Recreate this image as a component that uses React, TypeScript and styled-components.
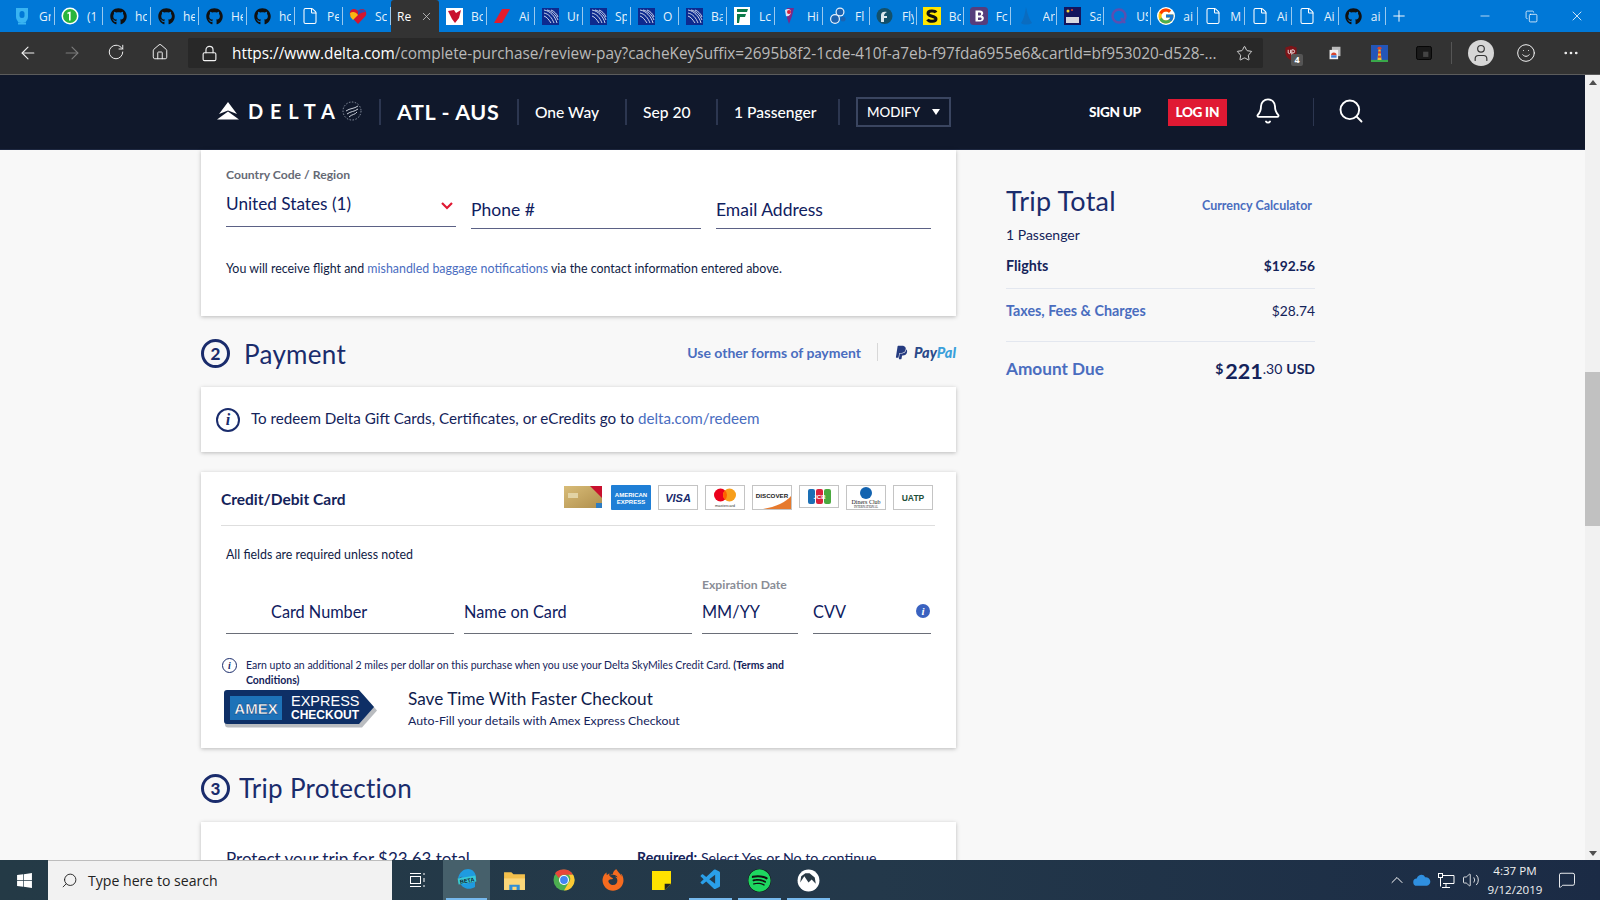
import React from "react";
import styled, { createGlobalStyle } from "styled-components";
import {
  ArrowLeft,
  ArrowRight,
  RotateCw,
  Home,
  Lock,
  Star,
  Bell,
  Search,
  Minus,
  X,
  Plus,
  Copy,
  Smile,
  MoreHorizontal,
  ChevronUp,
  User,
  File,
  Volume2,
  MessageSquare,
} from "lucide-react";
import { FaGithub, FaWindows, FaFirefoxBrowser, FaSpotify, FaPaypal } from "react-icons/fa";
import { VscVscode } from "react-icons/vsc";
import { FcGoogle } from "react-icons/fc";

const GlobalStyle = createGlobalStyle`
  html, body {
    margin: 0;
    padding: 0;
    overflow: hidden;
    background: #f8f8f8;
  }
  * { box-sizing: border-box; }
`;

const SITE_FONT = `Lato, "Liberation Sans", sans-serif`;
const UI_FONT = `"Open Sans", "Noto Sans", sans-serif`;
const NAVY = "#0f2060";
const LINK = "#4a6dbf";

const Screen = styled.div`
  width: 1600px;
  height: 900px;
  display: flex;
  flex-direction: column;
  overflow: hidden;
  font-family: ${SITE_FONT};
`;

/* browser chrome */
const TabStrip = styled.div`
  height: 32px;
  background: #0078d7;
  display: flex;
  padding-left: 7px;
  flex: none;
`;
const Tab = styled.div<{ $active?: boolean; $w: number }>`
  width: ${(p) => p.$w}px;
  height: 32px;
  display: flex;
  align-items: center;
  position: relative;
  overflow: hidden;
  background: ${(p) => (p.$active ? "#333333" : "transparent")};
  border-radius: ${(p) => (p.$active ? "3px 3px 0 0" : "0")};
  &::after {
    content: "";
    display: ${(p) => (p.$active ? "none" : "block")};
    position: absolute;
    right: 0;
    top: 7px;
    bottom: 7px;
    width: 1px;
    background: rgba(255, 255, 255, 0.6);
  }
`;
const TabIcon = styled.span`
  width: 20px;
  height: 20px;
  margin-left: 5px;
  flex: none;
  display: flex;
  align-items: center;
  justify-content: center;
`;
const TabLabel = styled.span`
  margin-left: 7px;
  width: 12px;
  overflow: hidden;
  white-space: nowrap;
  font: 12px ${UI_FONT};
  color: #ffffff;
  opacity: 0.9;
`;
const ActiveLabel = styled.span`
  margin-left: 6px;
  font: 12px ${UI_FONT};
  color: #ffffff;
`;
const TabClose = styled.span`
  margin-left: 9px;
  display: flex;
  color: #c8c8c8;
`;
const NewTab = styled.span`
  width: 24px;
  margin-left: 1px;
  display: flex;
  align-items: center;
  justify-content: center;
  color: #fff;
`;
const WindowControls = styled.div`
  margin-left: auto;
  display: flex;
  align-items: center;
  color: #fff;
`;
const WindowButton = styled.span`
  width: 46px;
  display: flex;
  justify-content: center;
`;

const AddressBar = styled.div`
  height: 43px;
  background: #333333;
  border-bottom: 1px solid #5c5c5c;
  display: flex;
  align-items: center;
  color: #f2f2f2;
  flex: none;
`;
const NavButton = styled.span<{ $dim?: boolean }>`
  width: 44px;
  display: flex;
  justify-content: center;
  color: ${(p) => (p.$dim ? "#7d7d7d" : "#f2f2f2")};
`;
const NavGroup = styled.div`
  display: flex;
  width: 188px;
  padding-left: 6px;
`;
const UrlBox = styled.div`
  width: 1075px;
  height: 30px;
  border-radius: 2px;
  background: #282828;
  display: flex;
  align-items: center;
  padding: 0 10px 0 13px;
`;
const UrlText = styled.div`
  margin-left: 14px;
  flex: 1;
  font: 15.4px ${UI_FONT};
  color: #b9b9b9;
  white-space: nowrap;
  overflow: hidden;
  letter-spacing: -0.02px;
  b {
    font-weight: 400;
    color: #ffffff;
  }
`;
const Extensions = styled.div`
  display: flex;
  align-items: center;
  flex: 1;
  padding-left: 6px;
`;
const ExtSlot = styled.span`
  width: 44.3px;
  display: flex;
  justify-content: center;
  position: relative;
`;
const TrailSlot = styled(ExtSlot)`
  margin-left: 10px;
`;
const UBadge = styled.span`
  position: absolute;
  left: 22px;
  top: 9px;
  width: 12px;
  height: 12px;
  background: #555;
  border-radius: 2px;
  color: #fff;
  font: bold 9px/12px ${UI_FONT};
  text-align: center;
`;
const ExtDivider = styled.span`
  width: 1px;
  height: 22px;
  background: #555;
  margin: 0 16px 0 5px;
`;
const Avatar = styled.span`
  width: 26px;
  height: 26px;
  border-radius: 50%;
  background: #d6d6d6;
  color: #333;
  display: flex;
  align-items: center;
  justify-content: center;
`;

/* site area */
const Viewport = styled.div`
  flex: 1;
  min-height: 0;
  display: flex;
  background: #f8f8f8;
`;
const SitePane = styled.div`
  flex: 1;
  min-width: 0;
  display: flex;
  flex-direction: column;
  overflow: hidden;
`;
const ScrollBar = styled.div`
  width: 15px;
  background: #f1f1f1;
  display: flex;
  flex-direction: column;
  align-items: center;
  padding-top: 5px;
`;
const ScrollThumb = styled.div`
  width: 15px;
  height: 154px;
  background: #c1c1c1;
  margin-top: 287px;
`;
const ScrollArrow = styled.div<{ $down?: boolean }>`
  width: 0;
  height: 0;
  border-left: 4px solid transparent;
  border-right: 4px solid transparent;
  ${(p) => (p.$down ? "border-top: 5px solid #505050; margin-top: auto; margin-bottom: 4px;" : "border-bottom: 5px solid #505050;")}
`;

const SiteHeader = styled.header`
  height: 75px;
  background: #10182b;
  border-bottom: 1px solid #1d2740;
  display: flex;
  align-items: center;
  padding: 0 0 0 217px;
  color: #fff;
  flex: none;
`;
const Brand = styled.div`
  display: flex;
  align-items: center;
  width: 162px;
  margin-top: -3px;
`;
const BrandWord = styled.span`
  font: 700 20px ${SITE_FONT};
  letter-spacing: 6.8px;
  margin-left: 9px;
`;
const HeaderSep = styled.span`
  width: 2px;
  height: 26px;
  background: #2c3650;
  flex: none;
`;
const Route = styled.span`
  font: 700 21.5px ${SITE_FONT};
  letter-spacing: 0.6px;
  width: 136px;
  padding-left: 16px;
  white-space: nowrap;
`;
const Crumb = styled.span<{ $w: number }>`
  width: ${(p) => p.$w}px;
  padding-left: 16px;
  font: 500 15.6px ${SITE_FONT};
  white-space: nowrap;
`;
const ModifyButton = styled.span`
  width: 95px;
  height: 30px;
  margin-left: 16px;
  border: 2px solid #3a4560;
  display: flex;
  align-items: center;
  justify-content: space-between;
  padding: 0 9px 0 9px;
  font: 500 13.4px ${SITE_FONT};
`;
const Caret = styled.span`
  width: 0;
  height: 0;
  border-left: 4px solid transparent;
  border-right: 4px solid transparent;
  border-top: 6px solid #fff;
`;
const SignUp = styled.span`
  margin-left: 138px;
  font: 900 13.6px ${SITE_FONT};
  letter-spacing: -0.3px;
`;
const LogIn = styled.span`
  margin-left: 27px;
  width: 59px;
  height: 27px;
  background: #e01933;
  display: flex;
  align-items: center;
  justify-content: center;
  font: 900 13.6px ${SITE_FONT};
  letter-spacing: -0.3px;
`;
const HeaderIcon = styled.span<{ $ml: number }>`
  margin-left: ${(p) => p.$ml}px;
  display: flex;
  margin-top: -3px;
`;
const HeaderRule = styled.span`
  margin-left: 31px;
  width: 1px;
  height: 28px;
  background: #2c3650;
`;

const Columns = styled.div`
  display: flex;
  padding-left: 201px;
  gap: 50px;
  align-items: flex-start;
`;
const MainColumn = styled.main`
  width: 755px;
  flex: none;
`;
const Card = styled.section`
  background: #fff;
  box-shadow: 0 1px 4px rgba(0, 0, 0, 0.25);
`;
const ContactCard = styled(Card)`
  height: 166px;
  padding: 18px 25px 0;
`;
const SmallLabel = styled.div<{ $light?: boolean }>`
  font: 700 12.2px/14px ${SITE_FONT};
  color: ${(p) => (p.$light ? "#8a8d96" : "#666a75")};
`;
const ContactRow = styled.div`
  display: grid;
  grid-template-columns: 230px 230px 215px;
  column-gap: 15px;
  margin-top: 2px;
  align-items: start;
`;
const SelectField = styled.div`
  height: 43px;
  border-bottom: 1px solid #5b6185;
  display: flex;
  justify-content: space-between;
  align-items: flex-start;
  padding-top: 9px;
  font: 400 17.2px/22px ${SITE_FONT};
  color: ${NAVY};
`;
const SelectChevron = styled.svg`
  margin: 9px 3px 0 0;
`;
const LineField = styled.div<{ $h: number; $top: number; $size: number; $pad?: number; $rule?: string }>`
  height: ${(p) => p.$h}px;
  border-bottom: 1px solid ${(p) => p.$rule || "#5b6185"};
  padding: ${(p) => p.$top}px 0 0 ${(p) => p.$pad || 0}px;
  font: 400 ${(p) => p.$size}px/22px ${SITE_FONT};
  color: ${NAVY};
  position: relative;
  white-space: nowrap;
`;
const CvvField = styled(LineField)`
  margin-left: 5px;
`;
const Fine = styled.p`
  margin: 32px 0 0;
  font: 400 12.4px/16px ${SITE_FONT};
  color: #101c45;
  a {
    color: ${LINK};
    text-decoration: none;
  }
`;

const SectionHead = styled.div<{ $h: number; $gap: number; $top: number }>`
  height: ${(p) => p.$h}px;
  padding-top: ${(p) => p.$top}px;
  display: flex;
  align-items: center;
  gap: ${(p) => p.$gap}px;
`;
const StepCircle = styled.span`
  width: 29px;
  height: 29px;
  border: 3px solid #1a2c6c;
  border-radius: 50%;
  display: flex;
  align-items: center;
  justify-content: center;
  font: 900 17px ${SITE_FONT};
  color: #1a2c6c;
  flex: none;
`;
const SectionTitle = styled.h2`
  margin: 0;
  font: 400 26px ${SITE_FONT};
  letter-spacing: 0.3px;
  color: #1a2c6c;
`;
const PayAlt = styled.div`
  margin-left: auto;
  display: flex;
  align-items: center;
  margin-top: -3px;
`;
const PayLink = styled.a`
  font: 700 14px ${SITE_FONT};
  color: ${LINK};
`;
const PaySep = styled.span`
  width: 1px;
  height: 18px;
  background: #d8d8d8;
  margin: 0 16px;
`;
const PayPalMark = styled.span`
  display: flex;
  align-items: center;
  gap: 5px;
  font: italic 900 14.5px ${SITE_FONT};
  color: #2b4a8a;
  i {
    color: #3aa0db;
  }
`;

const RedeemCard = styled(Card)`
  height: 65px;
  display: flex;
  align-items: center;
  padding-left: 15px;
  gap: 11px;
  font: 400 15.2px ${SITE_FONT};
  color: #14235a;
  a {
    color: ${LINK};
  }
`;
const RedeemText = styled.span`
  margin-top: -3px;
`;
const InfoCircle = styled.span<{ $size: number; $stroke: number }>`
  width: ${(p) => p.$size}px;
  height: ${(p) => p.$size}px;
  border: ${(p) => p.$stroke}px solid #1a2c6c;
  border-radius: 50%;
  display: flex;
  align-items: center;
  justify-content: center;
  flex: none;
  font: italic 700 ${(p) => Math.round(p.$size * 0.66)}px "Liberation Serif", serif;
  color: #1a2c6c;
`;
const PaymentCard = styled(Card)`
  height: 276px;
  margin-top: 20px;
  padding: 0 21px 0 20px;
`;
const CardHead = styled.div`
  height: 54px;
  border-bottom: 1px solid #dedede;
  display: flex;
  align-items: center;
  justify-content: space-between;
  padding: 0 2px 0 0;
`;
const CardTitle = styled.div`
  font: 700 15.5px ${SITE_FONT};
  color: #14235a;
`;
const Logos = styled.div`
  display: flex;
  gap: 7px;
  margin-top: -2px;
`;
const LogoFrame = styled.svg`
  display: block;
`;
const PaymentBody = styled.div`
  padding: 21px 5px 0;
`;
const Required = styled.div`
  font: 400 12.4px/16px ${SITE_FONT};
  color: #101c45;
`;
const ExpiryRow = styled.div`
  margin: 15px 0 0 476px;
`;
const CardFields = styled.div`
  display: grid;
  grid-template-columns: 228px 228px 96px 123px;
  column-gap: 10px;
  margin-top: -4px;
`;
const CvvDot = styled.span`
  position: absolute;
  right: 1px;
  top: 16px;
  width: 14px;
  height: 14px;
  border-radius: 50%;
  background: #3a62c0;
  color: #fff;
  font: italic 700 11px/14px "Liberation Serif", serif;
  text-align: center;
`;
const EarnRow = styled.div`
  display: flex;
  margin: 24px 0 0 -4px;
  gap: 9px;
`;
const EarnText = styled.p`
  margin: 0;
  width: 545px;
  font: 400 10.5px/15px ${SITE_FONT};
  color: #14235a;
  b {
    font-weight: 700;
  }
`;
const AmexRow = styled.div`
  display: flex;
  margin: 2px 0 0 -2px;
  align-items: flex-start;
`;
const AmexCopy = styled.div`
  margin: -3px 0 0 30px;
`;
const AmexTitle = styled.div`
  font: 400 17.2px/24px ${SITE_FONT};
  color: #0f1c4d;
`;
const AmexSub = styled.div`
  font: 400 12.3px/19px ${SITE_FONT};
  color: #14235a;
`;
const ProtectionCard = styled(Card)`
  height: 80px;
  padding: 26px 25px 0;
  display: grid;
  grid-template-columns: 411px 1fr;
`;
const ProtectTitle = styled.div`
  font: 400 17px/22px ${SITE_FONT};
  color: #14235a;
`;
const ProtectNote = styled.div`
  font: 400 14.2px/20px ${SITE_FONT};
  color: #14235a;
  b {
    font-weight: 700;
  }
`;

/* trip total */
const Summary = styled.aside`
  width: 309px;
  padding-top: 31px;
`;
const SummaryHead = styled.div`
  display: flex;
  justify-content: space-between;
  align-items: center;
  padding-right: 3px;
  height: 40px;
`;
const SummaryTitle = styled.h2`
  margin: -2px 0 0;
  font: 400 27px ${SITE_FONT};
  letter-spacing: 0.2px;
  color: #1a2c6c;
`;
const CalcLink = styled.a`
  font: 700 12.5px ${SITE_FONT};
  color: ${LINK};
  margin-top: 8px;
`;
const Passengers = styled.div`
  font: 400 14px/20px ${SITE_FONT};
  color: #14235a;
  margin-top: 4px;
`;
const SummaryRow = styled.div<{ $h: number; $rule?: boolean; $top: number }>`
  height: ${(p) => p.$h}px;
  padding-top: ${(p) => p.$top}px;
  display: flex;
  justify-content: space-between;
  align-items: flex-start;
  border-bottom: ${(p) => (p.$rule ? "1px solid #e3e7ef" : "none")};
`;
const RowName = styled.span<{ $link?: boolean; $big?: boolean }>`
  font: 700 ${(p) => (p.$big ? 17.2 : 14.3)}px/22px ${SITE_FONT};
  color: ${(p) => (p.$link ? LINK : "#14235a")};
`;
const RowValue = styled.span<{ $bold?: boolean }>`
  font: ${(p) => (p.$bold ? 700 : 400)} 13.8px/22px ${SITE_FONT};
  color: #14235a;
`;
const Amount = styled.span`
  display: flex;
  align-items: flex-start;
  color: #14235a;
  font: 700 14px/22px ${SITE_FONT};
  strong {
    font: 700 21.5px/27px ${SITE_FONT};
    margin: 0 0 0 2px;
  }
  em {
    font-style: normal;
    font-weight: 400;
    margin-right: 4px;
  }
`;

/* task bar */
const TaskBar = styled.div`
  height: 40px;
  flex: none;
  display: flex;
  align-items: center;
  background: linear-gradient(90deg, #243a46 0%, #23384a 55%, #1b2b45 100%);
  color: #fff;
`;
const StartButton = styled.span`
  width: 48px;
  display: flex;
  justify-content: center;
`;
const SearchBox = styled.div`
  width: 344px;
  height: 40px;
  background: #f2f2f2;
  border-top: 1px solid #bdbdbd;
  display: flex;
  align-items: center;
  padding-left: 13px;
  gap: 10px;
  color: #222;
  font: 14.1px ${UI_FONT};
`;
const TaskSlot = styled.span<{ $w?: number; $active?: boolean; $running?: boolean }>`
  width: ${(p) => p.$w || 49}px;
  height: 40px;
  display: flex;
  align-items: center;
  justify-content: center;
  position: relative;
  background: ${(p) => (p.$active ? "#46606b" : "transparent")};
  &::after {
    content: "";
    display: ${(p) => (p.$running ? "block" : "none")};
    position: absolute;
    left: 3px;
    right: 3px;
    bottom: 0;
    height: 2px;
    background: #76b9ed;
  }
`;
const Tray = styled.div`
  margin-left: auto;
  display: flex;
  align-items: center;
  height: 40px;
  padding-right: 13px;
`;
const TraySlot = styled.span`
  width: 24.5px;
  display: flex;
  justify-content: center;
`;
const Clock = styled.div`
  width: 64px;
  text-align: center;
  white-space: nowrap;
  font: 11.6px/19px ${UI_FONT};
  color: #f0f0f0;
`;
const Notify = styled.span`
  width: 40px;
  display: flex;
  justify-content: center;
`;

type FavKind =
  | "mic" | "whatsapp" | "github" | "doc" | "southwest" | "virgin" | "slash" | "united"
  | "lc" | "hi" | "bubbles" | "fly" | "s" | "boot" | "fin" | "ivy" | "q" | "google";

const tabs: { kind: FavKind; label: string }[] = [
  { kind: "mic", label: "Gr" },
  { kind: "whatsapp", label: "(1" },
  { kind: "github", label: "hc" },
  { kind: "github", label: "he" },
  { kind: "github", label: "He" },
  { kind: "github", label: "hc" },
  { kind: "doc", label: "Pe" },
  { kind: "southwest", label: "Sc" },
  { kind: "doc", label: "Re" },
  { kind: "virgin", label: "Bc" },
  { kind: "slash", label: "Ai" },
  { kind: "united", label: "Ur" },
  { kind: "united", label: "Sp" },
  { kind: "united", label: "O" },
  { kind: "united", label: "Ba" },
  { kind: "lc", label: "Lc" },
  { kind: "hi", label: "Hi" },
  { kind: "bubbles", label: "Fl" },
  { kind: "fly", label: "Fly" },
  { kind: "s", label: "Bc" },
  { kind: "boot", label: "Fc" },
  { kind: "fin", label: "Ar" },
  { kind: "ivy", label: "Sa" },
  { kind: "q", label: "US" },
  { kind: "google", label: "ai" },
  { kind: "doc", label: "M" },
  { kind: "doc", label: "Ai" },
  { kind: "doc", label: "Ai" },
  { kind: "github", label: "ai" },
];

const Favicon = ({ kind }: { kind: FavKind }) => {
  switch (kind) {
    case "mic":
      return (
        <svg width="16" height="18" viewBox="0 0 16 18">
          <path d="M2 1h12v9a6 6 0 0 1-12 0z" fill="#39b4f2" />
          <rect x="5.5" y="4" width="5" height="7" rx="2.5" fill="#0078d7" />
          <rect x="4" y="15.5" width="8" height="2" fill="#39b4f2" />
        </svg>
      );
    case "whatsapp":
      return (
        <svg width="18" height="18" viewBox="0 0 18 18">
          <circle cx="9" cy="9" r="8.5" fill="#fff" />
          <circle cx="9" cy="9" r="7" fill="#29b53d" />
          <path d="M9.6 4.5v9H8v-7l-1.5.7V5.6z" fill="#fff" />
        </svg>
      );
    case "github":
      return <FaGithub size={17} color="#101010" />;
    case "doc":
      return <File size={18} color="#fff" strokeWidth={1.4} />;
    case "southwest":
      return (
        <svg width="18" height="17" viewBox="0 0 18 17">
          <path d="M9 16 1.5 8C-.5 5 1.500 1 5 1c2 0 3.200 1 4 2.200C9.800 2 11 1 13 1c3.500 0 5.500 4 3.500 7z" fill="#d5152e" />
          <path d="M1 5c3-2 6-1 8 2l-5 5-2.500-3z" fill="#f9b612" />
          <path d="M9 3.200C11 1 15 .5 17 4c-3 0-6 1-8 3z" fill="#304cb2" />
        </svg>
      );
    case "virgin":
      return (
        <svg width="17" height="17" viewBox="0 0 17 17">
          <rect width="17" height="17" fill="#fff" />
          <path d="M2 3 8 2l2 3 5-3-2 8-4 5-3-4z" fill="#c8102e" />
        </svg>
      );
    case "slash":
      return (
        <svg width="18" height="16" viewBox="0 0 18 16">
          <path d="M9 1h8L9 15H1z" fill="#e31c2d" />
        </svg>
      );
    case "united":
      return (
        <svg width="17" height="17" viewBox="0 0 17 17">
          <rect width="17" height="17" fill="#0d2a8f" />
          <g fill="none" stroke="#dfe6f5" strokeWidth="0.9">
            <path d="M2 2c6 1 11 6 13 13" />
            <path d="M2 5c5 1 8 5 10 10" />
            <path d="M2 8c3 1 5 4 7 7" />
            <path d="M5 2c5 1 9 5 11 10" />
            <path d="M9 2c3 1 6 4 7 7" />
          </g>
        </svg>
      );
    case "lc":
      return (
        <svg width="16" height="18" viewBox="0 0 16 18">
          <rect width="16" height="18" fill="#fff" />
          <path d="M3 2h11l-1 3H3zM3 7h9l-1 3H6l-1 6H3z" fill="#0c7a4a" />
        </svg>
      );
    case "hi":
      return (
        <svg width="16" height="18" viewBox="0 0 16 18">
          <path d="M5 1h7l-2 8-3 8-2-6z" fill="#7a2a8a" />
          <path d="M3 3c3-2 6-1 6 2s-3 5-5 4z" fill="#e0e0f0" />
          <circle cx="7" cy="5" r="2" fill="#d8203a" />
        </svg>
      );
    case "bubbles":
      return (
        <svg width="18" height="18" viewBox="0 0 18 18">
          <circle cx="6" cy="12" r="5" fill="#e8f1fb" />
          <circle cx="11" cy="5" r="4.500" fill="#e8f1fb" />
          <circle cx="6" cy="12" r="3.800" fill="#1d63b0" />
          <circle cx="11" cy="5" r="3.300" fill="#1d63b0" />
          <circle cx="14" cy="12" r="2.500" fill="#1d63b0" />
        </svg>
      );
    case "fly":
      return (
        <svg width="17" height="18" viewBox="0 0 17 18">
          <circle cx="8.500" cy="9" r="8" fill="#12506a" />
          <path d="M5 15V8c0-3 3-4 6-3-2 1-3 2-3 4h3v2H8v4z" fill="#dbe7ec" />
        </svg>
      );
    case "s":
      return (
        <svg width="18" height="18" viewBox="0 0 18 18">
          <rect width="18" height="18" fill="#ffe600" />
          <path d="M13 5.500C12 3.500 5 3 5 6.500c0 3.500 8 2 8 5.500 0 3-7 3-8.500.5" fill="none" stroke="#111" strokeWidth="3" />
        </svg>
      );
    case "boot":
      return (
        <svg width="18" height="18" viewBox="0 0 18 18">
          <rect width="18" height="18" rx="3.500" fill="#563d7c" />
          <path d="M5.500 3.500h4.500c4 0 4 4.500 1.500 5 3.500.5 3 6-1.500 6H5.500zM8 5.500v3h2c1.500 0 1.500-3 0-3zm0 5v2.500h2.300c1.800 0 1.800-2.500 0-2.500z" fill="#fff" />
        </svg>
      );
    case "fin":
      return (
        <svg width="14" height="18" viewBox="0 0 14 18">
          <path d="M7 0c1 5 3 12 6 16-3 2-9 2-11 0 3-4 4-10 5-16z" fill="#0a6cc0" />
        </svg>
      );
    case "ivy":
      return (
        <svg width="17" height="18" viewBox="0 0 17 18">
          <rect width="17" height="18" fill="#13155e" />
          <circle cx="4" cy="4" r="1.500" fill="#f0d23a" />
          <circle cx="8" cy="3" r="1" fill="#e2492d" />
          <rect x="2" y="10" width="13" height="6" fill="#eee" opacity="0.9" />
        </svg>
      );
    case "q":
      return (
        <svg width="18" height="18" viewBox="0 0 18 18">
          <circle cx="9" cy="9" r="6.500" fill="none" stroke="#5b4fb0" strokeWidth="2.500" />
          <path d="M11 11l4 5" stroke="#5b4fb0" strokeWidth="2.500" />
        </svg>
      );
    case "google":
      return <FcGoogle size={18} style={{ background: "#fff", borderRadius: "50%" }} />;
  }
};

const CardLogo = ({ children, bordered = true, h = 25 }: { children: React.ReactNode; bordered?: boolean; h?: number }) => (
  <LogoFrame width="40" height="25" viewBox="0 0 40 25">
    {bordered && <rect x="0.5" y="0.5" width="39" height={h - 1} fill="#fff" stroke="#c4c4c4" />}
    {children}
  </LogoFrame>
);

const DeltaMark = () => (
  <svg width="22" height="18" viewBox="0 0 22 18">
    <path d="M11 0 20 12 11 8.500 2 12z" fill="#fff" />
    <path d="M0 17.500 11 9.500 22 17.500z" fill="#fff" />
  </svg>
);

const SkyGlobe = () => (
  <svg width="20" height="20" viewBox="0 0 20 20">
    <circle cx="10" cy="10" r="9" fill="none" stroke="#9aa2b0" strokeWidth="0.9" strokeDasharray="1.500 1.500" />
    <g fill="none" stroke="#c9ced8" strokeWidth="1">
      <path d="M4 10c4-3 8-2 12-5" />
      <path d="M5 13c4-3 7-2 11-5" />
      <path d="M7 16c3-3 6-2 8-5" />
    </g>
  </svg>
);

const ChromeMark = () => (
  <svg width="22" height="22" viewBox="0 0 22 22">
    <circle cx="11" cy="11" r="10.500" fill="#4caf50" />
    <path d="M11 .5a10.500 10.500 0 0 1 9.100 5.250H11a5.250 5.250 0 0 0-5 3.600L2 4.200A10.500 10.500 0 0 1 11 .5z" fill="#e8463a" />
    <path d="M20.100 5.750A10.500 10.500 0 0 1 11 21.500l4.500-7.800a5.250 5.250 0 0 0 0-7.950z" fill="#fcc934" />
    <circle cx="11" cy="11" r="5" fill="#fff" />
    <circle cx="11" cy="11" r="3.900" fill="#4285f4" />
  </svg>
);

const AmexBadge = () => (
  <svg width="154" height="38" viewBox="0 0 154 38">
    <path d="M3 2h134l15 17-15 17H3a3 3 0 0 1-3-3V5a3 3 0 0 1 3-3z" fill="#b9bcc0" transform="translate(1 1.500)" />
    <path d="M3 0h132l15 17-15 17H3a3 3 0 0 1-3-3V3a3 3 0 0 1 3-3z" fill="#0e2f66" />
    <rect x="6" y="6" width="52" height="24" fill="#1d72b8" />
    <text x="32" y="24" textAnchor="middle" fontFamily="Liberation Sans, sans-serif" fontWeight="700" fontSize="15" fill="#fff" stroke="#0e2f66" strokeWidth="0.4">AMEX</text>
    <text x="67" y="16" fontFamily="Liberation Sans, sans-serif" fontSize="14.500" fill="#fff">EXPRESS</text>
    <text x="67" y="29" fontFamily="Liberation Sans, sans-serif" fontWeight="700" fontSize="12" fill="#fff">CHECKOUT</text>
  </svg>
);

const App = () => (
  <Screen>
    <GlobalStyle />
    <TabStrip>
      {tabs.map((tab, i) =>
        i === 8 ? (
          <Tab key={i} $w={48} $active>
            <ActiveLabel>{tab.label}</ActiveLabel>
            <TabClose>
              <X size={13} strokeWidth={1.5} />
            </TabClose>
          </Tab>
        ) : (
          <Tab key={i} $w={i < 17 ? 48 : 46.9}>
            <TabIcon>
              <Favicon kind={tab.kind} />
            </TabIcon>
            <TabLabel>{tab.label}</TabLabel>
          </Tab>
        )
      )}
      <NewTab>
        <Plus size={18} strokeWidth={1.3} />
      </NewTab>
      <WindowControls>
        <WindowButton>
          <Minus size={14} strokeWidth={1.2} />
        </WindowButton>
        <WindowButton>
          <Copy size={13} strokeWidth={1.4} />
        </WindowButton>
        <WindowButton>
          <X size={16} strokeWidth={1.2} />
        </WindowButton>
      </WindowControls>
    </TabStrip>
    <AddressBar>
      <NavGroup>
        <NavButton>
          <ArrowLeft size={20} strokeWidth={1.3} />
        </NavButton>
        <NavButton $dim>
          <ArrowRight size={20} strokeWidth={1.3} />
        </NavButton>
        <NavButton>
          <RotateCw size={18} strokeWidth={1.3} />
        </NavButton>
        <NavButton>
          <Home size={18} strokeWidth={1.3} />
        </NavButton>
      </NavGroup>
      <UrlBox>
        <Lock size={17} strokeWidth={1.6} />
        <UrlText>
          <b>https://www.delta.com</b>/complete-purchase/review-pay?cacheKeySuffix=2695b8f2-1cde-410f-a7eb-f97fda6955e6&amp;cartId=bf953020-d528-...
        </UrlText>
        <Star size={17} strokeWidth={1.2} />
      </UrlBox>
      <Extensions>
        <ExtSlot>
          <svg width="14" height="16" viewBox="0 0 16 20">
            <path d="M8 1l7 2v7c0 4-3 7-7 9-4-2-7-5-7-9V3z" fill="#7c1418" />
            <path d="M4.500 6v4a2 2 0 0 0 3 0V6M9 13V6h1.500a2 2 0 0 1 0 4H9" fill="none" stroke="#fff" strokeWidth="1" />
          </svg>
          <UBadge>4</UBadge>
        </ExtSlot>
        <ExtSlot>
          <svg width="14" height="14" viewBox="0 0 16 18">
            <rect x="4" y="1" width="11" height="12" fill="#bbb" />
            <rect x="1" y="5" width="11" height="12" fill="#f2f2f2" />
            <path d="M3 12a3.500 3.500 0 0 1 7 0z" fill="#d8452e" />
            <rect x="3" y="12" width="7" height="3" fill="#3f7fd8" />
          </svg>
        </ExtSlot>
        <ExtSlot>
          <svg width="17" height="17" viewBox="0 0 17 24" preserveAspectRatio="none">
            <rect width="17" height="24" fill="#2456b8" />
            <rect y="21" width="17" height="3" fill="#39a84a" />
            <path d="M6.500 21 7.500 6h2l1 15z" fill="#f1c232" />
            <rect x="7" y="9" width="3" height="3" fill="#d8452e" />
            <rect x="7" y="15" width="3" height="3" fill="#d8452e" />
            <circle cx="8.500" cy="4.500" r="2" fill="#d8452e" />
          </svg>
        </ExtSlot>
        <ExtSlot>
          <svg width="16" height="14" viewBox="0 0 18 16">
            <rect x="0.500" y="0.500" width="17" height="15" rx="2" fill="#1a1a1a" stroke="#000" />
            <rect x="8" y="6.500" width="6" height="6" fill="#444" />
          </svg>
        </ExtSlot>
        <ExtDivider />
        <Avatar>
          <User size={20} strokeWidth={1.4} />
        </Avatar>
        <TrailSlot>
          <Smile size={20} strokeWidth={1.2} />
        </TrailSlot>
        <ExtSlot>
          <MoreHorizontal size={18} strokeWidth={1.6} />
        </ExtSlot>
      </Extensions>
    </AddressBar>

    <Viewport>
      <SitePane>
        <SiteHeader>
          <Brand>
            <DeltaMark />
            <BrandWord>DELTA</BrandWord>
            <SkyGlobe />
          </Brand>
          <HeaderSep />
          <Route>ATL - AUS</Route>
          <HeaderSep />
          <Crumb $w={106}>One Way</Crumb>
          <HeaderSep />
          <Crumb $w={89}>Sep 20</Crumb>
          <HeaderSep />
          <Crumb $w={120}>1 Passenger</Crumb>
          <HeaderSep />
          <ModifyButton>
            MODIFY
            <Caret />
          </ModifyButton>
          <SignUp>SIGN UP</SignUp>
          <LogIn>LOG IN</LogIn>
          <HeaderIcon $ml={27}>
            <Bell size={28} strokeWidth={1.6} />
          </HeaderIcon>
          <HeaderRule />
          <HeaderIcon $ml={23}>
            <Search size={28} strokeWidth={1.6} />
          </HeaderIcon>
        </SiteHeader>

        <Columns>
          <MainColumn>
            <ContactCard>
              <SmallLabel>Country Code / Region</SmallLabel>
              <ContactRow>
                <SelectField>
                  United States (1)
                  <SelectChevron width="12" height="8" viewBox="0 0 12 8">
                    <path d="M1 1l5 5 5-5" fill="none" stroke="#e01933" strokeWidth="2.200" />
                  </SelectChevron>
                </SelectField>
                <LineField $h={45} $top={15} $size={17.5}>Phone #</LineField>
                <LineField $h={45} $top={15} $size={17.5}>Email Address</LineField>
              </ContactRow>
              <Fine>
                You will receive flight and <a>mishandled baggage notifications</a> via the contact information entered above.
              </Fine>
            </ContactCard>

            <SectionHead $h={71} $gap={14} $top={4}>
              <StepCircle>2</StepCircle>
              <SectionTitle>Payment</SectionTitle>
              <PayAlt>
                <PayLink>Use other forms of payment</PayLink>
                <PaySep />
                <PayPalMark>
                  <FaPaypal size={15} color="#253b80" />
                  <span>
                    Pay<i>Pal</i>
                  </span>
                </PayPalMark>
              </PayAlt>
            </SectionHead>

            <RedeemCard>
              <InfoCircle $size={24} $stroke={2}>i</InfoCircle>
              <RedeemText>
                To redeem Delta Gift Cards, Certificates, or eCredits go to <a>delta.com/redeem</a>
              </RedeemText>
            </RedeemCard>

            <PaymentCard>
              <CardHead>
                <CardTitle>Credit/Debit Card</CardTitle>
                <Logos>
                  <CardLogo bordered={false}>
                    <defs>
                      <linearGradient id="goldCard" x1="0" y1="0" x2="1" y2="1">
                        <stop offset="0" stopColor="#d8bc78" />
                        <stop offset="1" stopColor="#b08f4c" />
                      </linearGradient>
                    </defs>
                    <rect y="1" width="38" height="22" fill="url(#goldCard)" />
                    <path d="M26 1h12v12z" fill="#c8102e" />
                    <rect x="4" y="8" width="10" height="5" fill="#e2d3a4" />
                    <rect x="32" y="18" width="6" height="5" fill="#2d7cc1" />
                  </CardLogo>
                  <CardLogo bordered={false}>
                    <rect width="40" height="25" rx="1" fill="#1f7fd6" />
                    <text x="20" y="11.500" textAnchor="middle" fontFamily="Liberation Sans, sans-serif" fontWeight="700" fontSize="6" fill="#fff">AMERICAN</text>
                    <text x="20" y="18.500" textAnchor="middle" fontFamily="Liberation Sans, sans-serif" fontWeight="700" fontSize="6" fill="#fff">EXPRESS</text>
                  </CardLogo>
                  <CardLogo>
                    <text x="20" y="17" textAnchor="middle" fontFamily="Liberation Sans, sans-serif" fontStyle="italic" fontWeight="700" fontSize="11" fill="#1a2a6c">VISA</text>
                  </CardLogo>
                  <CardLogo>
                    <circle cx="15.500" cy="10" r="6.500" fill="#eb001b" />
                    <circle cx="24.500" cy="10" r="6.500" fill="#f79e1b" />
                    <path d="M20 5.300a6.500 6.500 0 0 1 0 9.400 6.500 6.500 0 0 1 0-9.400z" fill="#ff5f00" />
                    <text x="20" y="21.500" textAnchor="middle" fontFamily="Liberation Sans, sans-serif" fontSize="4" fill="#333">mastercard</text>
                  </CardLogo>
                  <CardLogo>
                    <path d="M11 24C24 22 34 17 39 11v13z" fill="#e67a2e" />
                    <text x="20" y="13" textAnchor="middle" fontFamily="Liberation Sans, sans-serif" fontWeight="700" fontSize="6.200" fill="#222">DISCOVER</text>
                  </CardLogo>
                  <CardLogo h={23}>
                    <rect x="9" y="4" width="7" height="15" rx="2" fill="#1b6fb5" />
                    <rect x="17" y="4" width="7" height="15" rx="2" fill="#d9233c" />
                    <rect x="25" y="4" width="7" height="15" rx="2" fill="#4aa93f" />
                    <text x="20.500" y="14" textAnchor="middle" fontFamily="Liberation Sans, sans-serif" fontWeight="700" fontSize="6" fill="#fff">JCB</text>
                  </CardLogo>
                  <CardLogo>
                    <circle cx="20" cy="8" r="6" fill="#1263b0" />
                    <text x="20" y="19" textAnchor="middle" fontFamily="Liberation Serif, serif" fontSize="6" fill="#222">Diners Club</text>
                    <text x="20" y="23" textAnchor="middle" fontFamily="Liberation Serif, serif" fontSize="3" fill="#222">INTERNATIONAL</text>
                  </CardLogo>
                  <CardLogo>
                    <text x="20" y="16" textAnchor="middle" fontFamily="Liberation Sans, sans-serif" fontWeight="700" fontSize="8.500" fill="#1f4f3a">UATP</text>
                  </CardLogo>
                </Logos>
              </CardHead>
              <PaymentBody>
                <Required>All fields are required unless noted</Required>
                <ExpiryRow>
                  <SmallLabel $light>Expiration Date</SmallLabel>
                </ExpiryRow>
                <CardFields>
                  <LineField $h={46} $top={13} $size={16.3} $pad={45} $rule="#6a6e78">Card Number</LineField>
                  <LineField $h={46} $top={13} $size={16.3} $rule="#6a6e78">Name on Card</LineField>
                  <LineField $h={46} $top={13} $size={16.3} $rule="#6a6e78">MM/YY</LineField>
                  <CvvField $h={46} $top={13} $size={16.3} $rule="#6a6e78">
                    CVV
                    <CvvDot>i</CvvDot>
                  </CvvField>
                </CardFields>
                <EarnRow>
                  <InfoCircle $size={15} $stroke={1}>i</InfoCircle>
                  <EarnText>
                    Earn upto an additional 2 miles per dollar on this purchase when you use your Delta SkyMiles Credit Card. <b>(Terms and Conditions)</b>
                  </EarnText>
                </EarnRow>
                <AmexRow>
                  <AmexBadge />
                  <AmexCopy>
                    <AmexTitle>Save Time With Faster Checkout</AmexTitle>
                    <AmexSub>Auto-Fill your details with Amex Express Checkout</AmexSub>
                  </AmexCopy>
                </AmexRow>
              </PaymentBody>
            </PaymentCard>

            <SectionHead $h={74} $gap={9} $top={6}>
              <StepCircle>3</StepCircle>
              <SectionTitle>Trip Protection</SectionTitle>
            </SectionHead>

            <ProtectionCard>
              <ProtectTitle>Protect your trip for $23.63 total</ProtectTitle>
              <ProtectNote>
                <b>Required:</b> Select Yes or No to continue
              </ProtectNote>
            </ProtectionCard>
          </MainColumn>

          <Summary>
            <SummaryHead>
              <SummaryTitle>Trip Total</SummaryTitle>
              <CalcLink>Currency Calculator</CalcLink>
            </SummaryHead>
            <Passengers>1 Passenger</Passengers>
            <SummaryRow $h={44} $top={10} $rule>
              <RowName>Flights</RowName>
              <RowValue $bold>$192.56</RowValue>
            </SummaryRow>
            <SummaryRow $h={53} $top={11} $rule>
              <RowName $link>Taxes, Fees &amp; Charges</RowName>
              <RowValue>$28.74</RowValue>
            </SummaryRow>
            <SummaryRow $h={60} $top={16}>
              <RowName $link $big>Amount Due</RowName>
              <Amount>
                $<strong>221</strong>
                <em>.30</em>USD
              </Amount>
            </SummaryRow>
          </Summary>
        </Columns>
      </SitePane>
      <ScrollBar>
        <ScrollArrow />
        <ScrollThumb />
        <ScrollArrow $down />
      </ScrollBar>
    </Viewport>

    <TaskBar>
      <StartButton>
        <FaWindows size={17} />
      </StartButton>
      <SearchBox>
        <Search size={17} strokeWidth={1.3} style={{ transform: "scaleX(-1)" }} />
        Type here to search
      </SearchBox>
      <TaskSlot $w={51}>
        <svg width="18" height="16" viewBox="0 0 18 16">
          <g fill="none" stroke="#fff" strokeWidth="1">
            <rect x="1.500" y="4.500" width="10" height="7" />
            <path d="M1 1.500h11M1 14.500h11M15 1v2M15 6v4M15 13v2" />
          </g>
        </svg>
      </TaskSlot>
      <TaskSlot $w={47} $active $running>
        <svg width="22" height="24" viewBox="0 0 22 24">
          <path d="M2 11C3 4 8 1 12 1c5 0 8 4 8 9H7c0 5 7 7 12 3v6c-6 4-15 1-15-6 0-2 1-4 3-5-2 1-4 2-5 3z" fill="#1f9be0" />
          <rect x="2" y="9" width="18" height="6" fill="#38c9d6" transform="rotate(-10 11 12)" />
          <text x="11" y="14.500" textAnchor="middle" fontFamily="Liberation Sans, sans-serif" fontWeight="700" fontSize="5.500" fill="#123" transform="rotate(-10 11 12)">BETA</text>
        </svg>
      </TaskSlot>
      <TaskSlot>
        <svg width="23" height="21" viewBox="0 0 22 20">
          <path d="M1 2h7l2 2h11v15H1z" fill="#f3c04c" />
          <rect x="1" y="8" width="20" height="11" fill="#fbd77a" />
          <path d="M6 14h10v5h-3v-3H9v3H6z" fill="#2f8fd8" />
        </svg>
      </TaskSlot>
      <TaskSlot>
        <ChromeMark />
      </TaskSlot>
      <TaskSlot>
        <FaFirefoxBrowser size={22} color="#f56b1f" />
      </TaskSlot>
      <TaskSlot>
        <svg width="19" height="19" viewBox="0 0 18 18">
          <path d="M0 0h18v12l-6 6H0z" fill="#ffe100" />
          <path d="M12 18v-6h6z" fill="#222" />
        </svg>
      </TaskSlot>
      <TaskSlot $running>
        <VscVscode size={24} color="#2a9fe8" />
      </TaskSlot>
      <TaskSlot $running>
        <FaSpotify size={23} color="#1ed760" style={{ background: "#111", borderRadius: "50%" }} />
      </TaskSlot>
      <TaskSlot $running>
        <svg width="25" height="25" viewBox="0 0 24 24">
          <circle cx="12" cy="12" r="10.500" fill="#fff" />
          <path d="M4 14l4-6 4 6 3-3 4 4-1-6-5-4H9L5 8z" fill="#2a3a45" />
        </svg>
      </TaskSlot>
      <Tray>
        <TraySlot>
          <ChevronUp size={20} strokeWidth={1.2} />
        </TraySlot>
        <TraySlot>
          <svg width="18" height="12" viewBox="0 0 17 11">
            <path d="M4 11a3.500 3.500 0 0 1-.5-7C5 0 10-.500 11.500 3a3.800 3.800 0 0 1 1.500 8z" fill="#2f8fdf" />
          </svg>
        </TraySlot>
        <TraySlot>
          <svg width="17" height="15" viewBox="0 0 17 15">
            <g fill="none" stroke="#fff" strokeWidth="1">
              <path d="M5 2.500h11v8H5M4 14.500h8M8 10.500v4" />
              <rect x="0.500" y="0.500" width="4" height="4" />
              <path d="M2.500 4.500v9" />
            </g>
          </svg>
        </TraySlot>
        <TraySlot>
          <Volume2 size={18} strokeWidth={1.1} />
        </TraySlot>
        <Clock>
          4:37 PM
          <br />
          9/12/2019
        </Clock>
        <Notify>
          <MessageSquare size={18} strokeWidth={1.2} />
        </Notify>
      </Tray>
    </TaskBar>
  </Screen>
);

export default App;
